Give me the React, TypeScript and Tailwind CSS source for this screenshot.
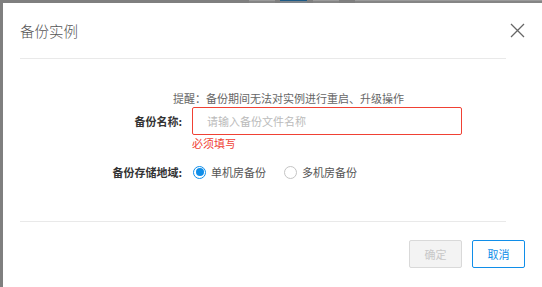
const font = { fontFamily: '"Noto Sans CJK SC", "Noto Sans", sans-serif' }

function CloseIcon() {
  return (
    <svg width="15" height="15" viewBox="0 0 15 15" className="block">
      <path d="M1 1 L14 14 M14 1 L1 14" stroke="#666" strokeWidth="1.3" fill="none" />
    </svg>
  )
}

function Radio({ checked, label }: { checked?: boolean; label: string }) {
  return (
    <label className="flex items-center gap-[5px] cursor-pointer">
      <span
        className={`w-[13px] h-[13px] rounded-full border flex items-center justify-center bg-white ${
          checked ? 'border-[#108ee9]' : 'border-[#c4c4c4]'
        }`}
      >
        {checked && <span className="w-[8px] h-[8px] rounded-full bg-[#108ee9]" />}
      </span>
      <span className="text-[11px] text-[#555]">{label}</span>
    </label>
  )
}

export default function App() {
  return (
    <div className="w-[542px] h-[287px] overflow-hidden bg-[#7f7f7f] pl-[3px]" style={font}>
      {/* 背景页面一角 */}
      <div className="h-[3px] flex">
        <div className="ml-[246px] w-[28px] border-t border-[#9a9a9a] bg-[#858585]" />
        <div className="ml-[5px] w-[29px] border-t border-[#1c5a86] bg-[#7d848a]" />
        <div className="ml-[6px] w-[27px] border-t border-[#9a9a9a] bg-[#858585]" />
        <div className="ml-[16px] w-[200px] border-t border-[#9a9a9a] bg-[#858585]" />
      </div>

      <div className="bg-white w-[560px] h-[300px]">
        {/* 헤더 */}
        <div className="h-[55px] flex items-center justify-between pl-[17px] pr-[38px]">
          <span className="text-[14.5px] font-light text-[#555]">备份实例</span>
          <CloseIcon />
        </div>
        <div className="ml-[17px] w-[486px] h-px bg-[#e9e9e9]" />

        {/* 본문 */}
        <div className="pt-[31px]">
          <p className="pl-[170px] text-[11px] leading-[17px] text-[#666]">
            提醒：备份期间无法对实例进行重启、升级操作
          </p>

          <div className="flex items-start">
            <span className="w-[179px] h-[28px] flex items-center justify-end text-[11px] font-bold text-[#333]">
              备份名称:
            </span>
            <div className="ml-[10px]">
              <input
                placeholder="请输入备份文件名称"
                className="w-[270px] h-[28px] border border-[#f04134] rounded-[2px] pl-[14px] text-[11px] placeholder:text-[#bbb] outline-none"
              />
              <p className="text-[11px] leading-[17px] text-[#f04134]">必须填写</p>
            </div>
          </div>

          <div className="flex items-center h-[20px] mt-[10px]">
            <span className="w-[179px] text-right text-[11px] font-bold text-[#333]">备份存储地域:</span>
            <div className="ml-[11px] flex items-center gap-[18px]">
              <Radio checked label="单机房备份" />
              <Radio label="多机房备份" />
            </div>
          </div>
        </div>

        {/* 하단 */}
        <div className="mt-[39px] ml-[17px] w-[486px] h-px bg-[#e9e9e9]" />
        <div className="flex gap-[10px] pl-[406px] pt-[18px]">
          <button
            disabled
            className="w-[53px] h-[28px] rounded-[2px] border border-[#d9d9d9] bg-[#f3f3f3] text-[11px] text-[#c8c8c8]"
          >
            确定
          </button>
          <button className="w-[53px] h-[28px] rounded-[2px] border border-[#108ee9] bg-white text-[11px] text-[#108ee9]">
            取消
          </button>
        </div>
      </div>
    </div>
  )
}
